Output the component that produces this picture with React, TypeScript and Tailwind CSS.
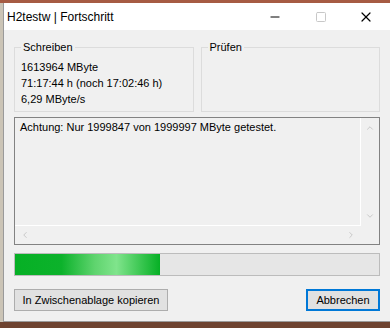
import { X, Minus, Square, ChevronUp, ChevronDown, ChevronLeft, ChevronRight } from "lucide-react";

const font = "font-['Segoe_UI','Liberation_Sans',Arial,sans-serif]";

function GroupBox({ title, lines }: { title: string; lines: string[] }) {
  return (
    <div className="relative h-[65px] border border-[#dcdcdc] pt-[11px] pl-[6px]">
      <span className="absolute -top-[9px] left-[6px] bg-[#f0f0f0] px-[2px] leading-[16px]">{title}</span>
      {lines.map((l) => (
        <div key={l} className="leading-[16px] whitespace-nowrap">
          {l}
        </div>
      ))}
    </div>
  );
}

export default function App() {
  return (
    <div className={`w-[390px] h-[328px] overflow-hidden flex flex-col bg-[#6e4330] text-[11px] text-black ${font}`}>
      {/* desktop strip above the window */}
      <div className="h-[3px] bg-[#a65b43] shrink-0" />
      <div className="flex">
        <div className="w-[3px] bg-[#cbc4b6] shrink-0" />
        {/* Window */}
        <div className="w-[387px] h-[319px] flex flex-col border-l border-b border-[#9a9a9a] bg-[#f0f0f0]">
          {/* Title bar */}
          <div className="h-[27px] bg-white flex items-center shrink-0">
            <span className="pl-[3px] text-[12px] flex-1">H2testw | Fortschritt</span>
            <div className="w-[46px] flex justify-center">
              <Minus size={14} strokeWidth={1} absoluteStrokeWidth />
            </div>
            <div className="w-[46px] flex justify-center text-[#c8c8c8]">
              <Square size={12} strokeWidth={1} absoluteStrokeWidth />
            </div>
            <div className="w-[46px] flex justify-center pr-[3px]">
              <X size={16} strokeWidth={1.2} absoluteStrokeWidth />
            </div>
          </div>

          {/* Body */}
          <div className="px-[10px] flex flex-col">
            <div className="mt-[17px] grid grid-cols-2 gap-[7px]">
              <GroupBox
                title="Schreiben"
                lines={["1613964 MByte", "71:17:44 h (noch 17:02:46 h)", "6,29 MByte/s"]}
              />
              <GroupBox title="Prüfen" lines={[]} />
            </div>

            {/* Log box */}
            <div className="mt-[5px] h-[128px] border border-[#828282] grid grid-cols-[1fr_18px] grid-rows-[1fr_18px]">
              <div className="border-r border-b border-white pl-[5px] pt-[1px] leading-[16px]">
                Achtung: Nur 1999847 von 1999997 MByte getestet.
              </div>
              <div className="flex flex-col items-center justify-between py-[5px] text-[#c0c0c0]">
                <ChevronUp size={10} strokeWidth={2} />
                <ChevronDown size={10} strokeWidth={2} />
              </div>
              <div className="flex items-center justify-between px-[5px] text-[#c0c0c0]">
                <ChevronLeft size={10} strokeWidth={2} />
                <ChevronRight size={10} strokeWidth={2} />
              </div>
              <div />
            </div>

            {/* Progress */}
            <div className="mt-[8px] h-[23px] border border-[#bcbcbc] bg-[#e6e6e6]">
              <div className="h-full w-[145px] bg-[linear-gradient(90deg,#06b025_0%,#0cb22b_32%,#5fd46e_55%,#80e48c_70%,#3ec854_86%,#06b025_100%)]" />
            </div>

            {/* Buttons */}
            <div className="mt-[13px] flex justify-between">
              <button className="h-[22px] w-[154px] border border-[#adadad] bg-[#e1e1e1] leading-none">
                In Zwischenablage kopieren
              </button>
              <button className="h-[22px] w-[74px] border-2 border-[#0078d7] bg-[#e1e1e1] leading-none">
                Abbrechen
              </button>
            </div>
          </div>
        </div>
      </div>
    </div>
  );
}
